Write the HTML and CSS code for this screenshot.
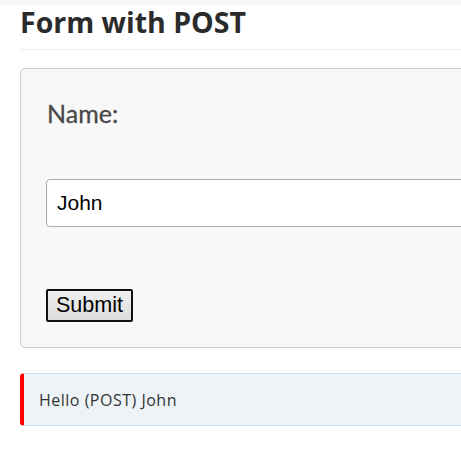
FILE: index.html
```html
<!DOCTYPE html>
<html>
<head>
<meta charset="utf-8">
<link rel="stylesheet" href="styles.css">
</head>
<body>
<div class="topbar"></div>
<main class="page">
  <h1 class="title">Form with POST</h1>
  <form class="card">
    <label class="label" for="name">Name:</label>
    <input class="field" id="name" type="text" value="John">
    <div class="actions"><button class="btn" type="button">Submit</button></div>
  </form>
  <div class="message">Hello (POST) John</div>
</main>
</body>
</html>
```
FILE: styles.css
```css
html, body { margin: 0; padding: 0; overflow: hidden; background: #fff; }
.topbar { height: 5px; background: #f6f6f6; }
.page { width: 700px; padding: 0 0 0 20px; font-family: "Open Sans", sans-serif; color: #333; }
.title { margin: 0; padding: 0; font-size: 28.5px; line-height: 34px; font-weight: 700; color: #2b2b2b; height: 44px; border-bottom: 1px solid #eee; }
.card { margin-top: 18px; box-sizing: border-box; background: #f8f8f8; border: 1px solid #ccc; border-radius: 5px; padding: 29px 25px 25px; display: flex; flex-direction: column; }
.label { padding-left: 1px; font-family: Lato, sans-serif; font-size: 25px; color: #484848; line-height: 30px; -webkit-text-stroke: 0.3px #484848; }
.field { flex-shrink: 0; margin-top: 51px; box-sizing: border-box; height: 48px; border: 1px solid #aaa; border-radius: 4px; padding: 0 10px; font-family: "Liberation Sans", Arial, sans-serif; font-size: 21px; color: #000; background: #fff; }
.actions { margin-top: 62px; }
.btn { font-family: "Liberation Sans", Arial, sans-serif; font-size: 21.5px; color: #000; padding: 0 8px; height: 33px; border: 2px solid #111; border-radius: 2px; background: linear-gradient(#f0f0f0, #dcdcdc); }
.message { margin-top: 25px; box-sizing: border-box; height: 53px; background: #eef3f8; border: 1px solid #d0dfee; border-left: 4px solid #f00; border-radius: 4px; padding: 0 15px; display: flex; align-items: center; font-size: 16px; letter-spacing: 0.5px; color: #333; }
```
